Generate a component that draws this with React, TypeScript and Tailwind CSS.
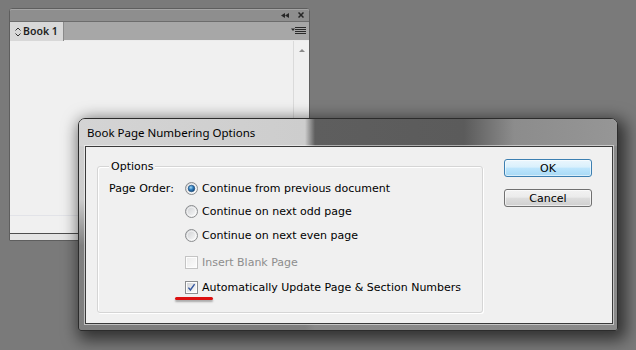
import React, { useId } from "react";

const Radio = ({ checked }: { checked?: boolean }) => {
  const id = useId().replace(/[^a-zA-Z0-9]/g, "");
  return (
    <svg width="13" height="13" viewBox="0 0 13 13" className="shrink-0">
      <defs>
        <linearGradient id={`${id}b`} x1="0" y1="0" x2="1" y2="1">
          <stop offset="0" stopColor="#c9cbce" />
          <stop offset="1" stopColor="#ffffff" />
        </linearGradient>
        <radialGradient id={`${id}d`} cx="0.4" cy="0.35" r="0.75">
          <stop offset="0" stopColor="#a6dcf8" />
          <stop offset="0.45" stopColor="#2f7cbc" />
          <stop offset="1" stopColor="#0c3866" />
        </radialGradient>
      </defs>
      <circle cx="6.5" cy="6.5" r="6" fill={`url(#${id}b)`} stroke="#8b8d8f" />
      <circle cx="6.5" cy="6.5" r="4.3" fill="none" stroke="#ffffff" strokeOpacity="0.6" />
      {checked && (
        <circle cx="6.5" cy="6.5" r="3.3" fill={`url(#${id}d)`} stroke="#1c4b7c" strokeWidth="0.6" />
      )}
    </svg>
  );
};

const Check = ({ checked, disabled }: { checked?: boolean; disabled?: boolean }) => {
  const id = useId().replace(/[^a-zA-Z0-9]/g, "");
  return (
    <svg width="13" height="13" viewBox="0 0 13 13" className="shrink-0">
      <defs>
        <linearGradient id={`${id}c`} x1="0" y1="0" x2="1" y2="1">
          <stop offset="0" stopColor={disabled ? "#ececec" : "#d4d6d9"} />
          <stop offset="1" stopColor="#fbfbfb" />
        </linearGradient>
      </defs>
      <rect x="0.5" y="0.5" width="12" height="12" fill="#fdfdfd" stroke={disabled ? "#c4c4c4" : "#8b8d8f"} />
      <rect x="2" y="2" width="9" height="9" fill={`url(#${id}c)`} />
      {checked && (
        <path d="M3.4 6.6 L5.4 9 L9.6 3.2" fill="none" stroke="#3558a0" strokeWidth="1.4" />
      )}
    </svg>
  );
};

const Option = ({
  children,
  control,
  className = "h-[23px]",
  muted,
}: {
  children: React.ReactNode;
  control: React.ReactNode;
  className?: string;
  muted?: boolean;
}) => (
  <div className={`flex items-center gap-[4px] ${className}`}>
    {control}
    <span className={muted ? "text-[#8d8d8d]" : "text-black"}>{children}</span>
  </div>
);

const BookPanel = () => (
  <div className="absolute left-[9px] top-[8px] w-[301px] h-[233px] flex flex-col overflow-hidden rounded-t-[3px] border border-[#5e5e5e] bg-[#e6e6e6]">
    <div className="h-[13px] shrink-0 flex items-center justify-end gap-[9px] pr-[5px] bg-[#8e8e8e] border-b border-[#6c6c6c] shadow-[inset_0_1px_0_#a4a4a4]">
      <svg width="8" height="5" viewBox="0 0 8 5">
        <polygon points="0,2.5 4,0 4,5" fill="#262626" />
        <polygon points="4,2.5 8,0 8,5" fill="#262626" />
      </svg>
      <svg width="6" height="6" viewBox="0 0 6 6">
        <path d="M0.5 0.5 L5.5 5.5 M5.5 0.5 L0.5 5.5" stroke="#262626" strokeWidth="1.5" />
      </svg>
    </div>
    <div className="h-[19px] shrink-0 flex">
      <div className="w-[54px] flex items-center gap-[2px] pl-[5px] bg-[#d8d8d8] border-r border-[#8a8a8a] text-[#1e1e1e] font-['Noto_Sans',sans-serif] font-semibold text-[10.5px]">
        <svg width="6" height="10" viewBox="0 0 6 10">
          <path d="M0.5 3.5 L3 1 L5.5 3.5 M0.5 6.5 L3 9 L5.5 6.5" fill="none" stroke="#333" />
        </svg>
        <span>Book 1</span>
      </div>
      <div className="flex-1 flex items-center justify-end pr-[3px] bg-[#a7a7a7] border-b border-[#ececec]">
        <svg width="15" height="8" viewBox="0 0 15 8">
          <polygon points="0,1.5 4,1.5 2,4" fill="#2a2a2a" />
          <path d="M4 0.5 H15 M4 2.5 H15 M4 4.5 H15 M4 6.5 H15" stroke="#2a2a2a" />
        </svg>
      </div>
    </div>
    <div className="h-[192px] shrink-0 flex flex-col bg-[#f0f0f0]">
      <div className="h-[174px] flex">
        <div className="flex-1" />
        <div className="w-[16px] flex justify-center pt-[8px] border-l border-[#dadada]">
          <svg width="6" height="3" viewBox="0 0 6 3">
            <polygon points="0,3 3,0 6,3" fill="#8a8a8a" />
          </svg>
        </div>
      </div>
      <div className="flex-1 border-t border-[#e2e3e8]" />
    </div>
    <div className="flex-1 border-t border-[#4e4e4e] bg-[#e4e4e4]" />
  </div>
);

const Dialog = () => (
  <div className="absolute left-[78px] top-[118px] w-[540px] h-[213px] flex flex-col overflow-hidden rounded-t-[7px] rounded-b-[3px] border border-[#2c2c2c] shadow-[4px_5px_16px_4px_rgba(0,0,0,0.6)] bg-[linear-gradient(to_bottom,#cfcfcf_0%,#cdcdcd_38%,#808080_60%,#7e7e7e_100%)]">
    <div className="h-[27px] shrink-0 flex items-center pl-[8px] text-black font-['Noto_Sans',sans-serif] text-[11.5px] bg-[linear-gradient(90deg,#d4d4d4_0px,#cdcdcd_226px,#5e5e5e_236px,#5b5b5b_385px,#8c8c8c_435px,#969696_538px)]">
      Book Page Numbering Options
    </div>
    <div className="flex-1 flex pl-[6px] pr-[4px] pb-[6px] bg-[linear-gradient(90deg,transparent_0px,transparent_226px,#888888_236px,#8a8a8a_538px)]">
      <div className="w-[528px] h-[178px] flex items-start pl-[11px] border border-[#3a3a3a] bg-[#f0f0f0] shadow-[0_0_0_1px_rgba(255,255,255,0.5)] text-[11px] leading-[13px]">
        <div className="relative mt-[19px] w-[386px] h-[147px] pl-[11px] pt-[10px] rounded-[3px] border border-[#d5d5d5] shadow-[inset_1px_1px_0_#ffffff,1px_1px_0_#ffffff]">
          <span className="absolute left-[11px] top-[-7px] px-[2px] bg-[#f0f0f0] text-black">Options</span>
          <div className="flex">
            <div className="w-[76px] h-[23px] flex items-center text-black">Page Order:</div>
            <div className="flex flex-col">
              <Option control={<Radio checked />}>Continue from previous document</Option>
              <Option control={<Radio />}>Continue on next odd page</Option>
              <Option control={<Radio />} className="h-[24px]">
                Continue on next even page
              </Option>
              <Option control={<Check disabled />} className="h-[24px] mt-[3px]" muted>
                Insert Blank Page
              </Option>
              <Option control={<Check checked />} className="h-[24px] mt-[1px]">
                Automatically Update Page &amp; Section Numbers
              </Option>
            </div>
          </div>
          <div className="absolute left-[77px] top-[130px] w-[38px] h-[3px] rounded-full bg-[#dc1010] shadow-[0_2px_2px_rgba(0,0,0,0.3)]" />
        </div>
        <div className="ml-[21px] mt-[12px] flex flex-col gap-[12px]">
          <button className="w-[88px] h-[18px] flex items-center justify-center rounded-[3px] border border-[#3c7fb1] bg-[linear-gradient(to_bottom,#eaf6fd_0%,#d9f0fc_45%,#bee6fd_50%,#a7d9f5_100%)] shadow-[inset_0_0_0_1px_rgba(255,255,255,0.55)] text-black">
            OK
          </button>
          <button className="w-[88px] h-[18px] flex items-center justify-center rounded-[3px] border border-[#707070] bg-[linear-gradient(to_bottom,#f2f2f2_0%,#ebebeb_45%,#dddddd_50%,#cfcfcf_100%)] shadow-[inset_0_0_0_1px_rgba(255,255,255,0.6)] text-black">
            Cancel
          </button>
        </div>
      </div>
    </div>
  </div>
);

export default function App() {
  return (
    <div className="relative w-[636px] h-[350px] overflow-hidden bg-[#7a7a7a] font-['DejaVu_Sans',Verdana,sans-serif]">
      <BookPanel />
      <Dialog />
    </div>
  );
}
